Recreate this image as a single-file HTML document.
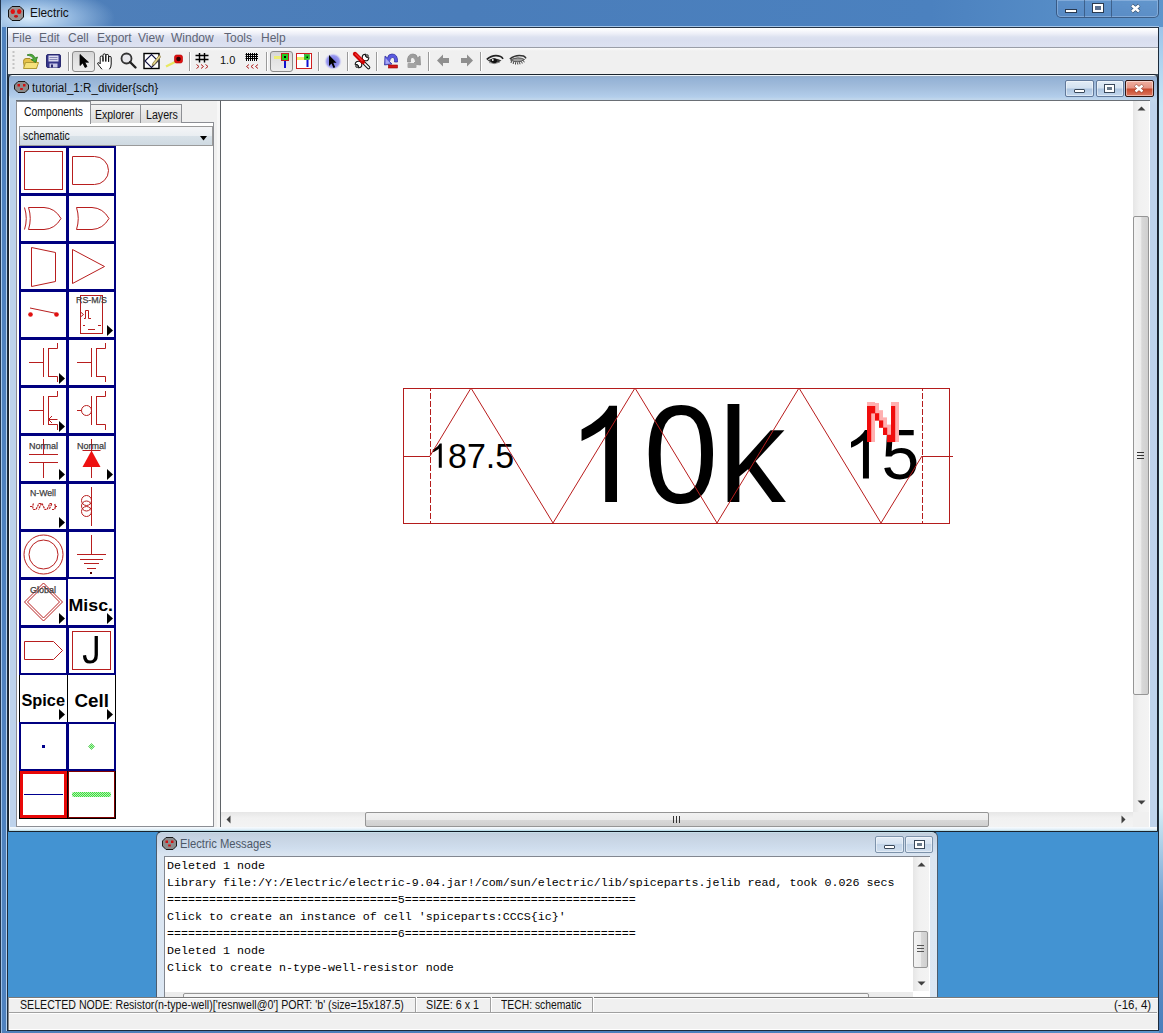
<!DOCTYPE html>
<html><head><meta charset="utf-8">
<style>
*{margin:0;padding:0;box-sizing:border-box}
html,body{width:1163px;height:1033px;overflow:hidden;background:#4393d2;font-family:"Liberation Sans",sans-serif;}
.a{position:absolute}
svg{position:absolute;overflow:visible}
#outer{left:0;top:0;width:1163px;height:1033px;background:linear-gradient(90deg,#4f7fb9 0%,#4a7dba 40%,#4b81bf 80%,#5e95cc 100%);}
#glow{left:0;top:0;width:200px;height:27px;background:radial-gradient(ellipse 85px 30px at 30px 18px,rgba(225,242,255,.95),rgba(190,220,248,.6) 50%,rgba(120,160,210,0) 100%);}
#menubar{left:8px;top:27px;width:1150px;height:21px;background:linear-gradient(#fff 0,#fafbfd 2px,#eceef7 6px,#dde2f0 9px,#d9deef 12px,#dde2f1 19px);border-top:1px solid #263445;border-bottom:1px solid #9a9ea8;}
#menubar span{position:absolute;top:3px;font-size:12px;color:#5e6474;}
#toolbar{left:8px;top:48px;width:1150px;height:26px;background:linear-gradient(#fbfbfb,#f0f0f0 3px);}
.sep{position:absolute;top:52px;width:1px;height:19px;background:#9a9a9a;box-shadow:1px 0 0 #fff}
.pbtn{position:absolute;top:51px;width:23px;height:21px;border:1px solid #8b8b8b;border-radius:3px;background:linear-gradient(#d6d6d6,#e4e4e4 50%,#ececec);}
#mdi{left:8px;top:74px;width:1150px;height:923px;background:#4393d2;}
#inner{left:8px;top:74px;width:1150px;height:758px;background:linear-gradient(#eef6fb 0,#eef6fb 1px,#95abc5 1px,#93b1d5 3px,#a2bddc 12px,#b3ceeb 22px,#c0d6ec 24px,#bdd3ec 30px,#bed3ec);border:1px solid #1a232c;border-radius:4px 4px 0 0;}
#lp{left:16px;top:100px;width:201px;height:727px;background:#f0f0f0;border-top:1px solid #6a6f75;}
#canvas{left:220px;top:100px;width:930px;height:727px;background:#fff;border-left:1px solid #5f6367;border-top:1px solid #6a6f75;}
#msgwin{left:156px;top:831px;width:782px;height:167px;background:linear-gradient(#c4dde8 0,#c4dde8 1px,#c2cedc 1px,#c6d3e2 5px,#cfdded 16px,#dae5f1 23px,#dce7f3);border:1px solid #4b5c6e;border-top-color:#0e1a24;border-radius:6px 6px 0 0;}
#status{left:8px;top:997px;width:1150px;height:33px;background:#f0f0f0;border-top:1px solid #7a7a7a;box-shadow:inset 0 1px 0 #fff, inset 0 -1px 0 #fff;}
.wb{position:absolute;border:1px solid #62799a;border-radius:2px;background:linear-gradient(#e2ecf6 0%,#d3e1f0 46%,#adc5e0 54%,#c4d8ee 100%);box-shadow:inset 0 0 0 1px rgba(255,255,255,.45);}
.mono{font-family:"Liberation Mono",monospace;font-size:11.67px;color:#000;position:absolute;left:167px;white-space:pre;}
</style></head><body>
<div id="outer" class="a"></div>
<div id="glow" class="a"></div>
<div class="a" style="left:0;top:0;width:1px;height:1033px;background:#22344c"></div>
<div class="a" style="left:1px;top:20px;width:1px;height:1013px;background:linear-gradient(#b8d8f4,#a6c8ec 30%,#9cc0e8)"></div><div class="a" style="left:2px;top:27px;width:4px;height:1004px;background:#4f82bf"></div>
<div class="a" style="left:6px;top:27px;width:1px;height:1004px;background:#b4d0ee"></div>
<div class="a" style="left:7px;top:27px;width:1px;height:1004px;background:#1c2b3c"></div>
<div class="a" style="left:1158px;top:27px;width:1px;height:1004px;background:#1c2b3c"></div>
<div class="a" style="left:1159px;top:27px;width:4px;height:1006px;background:linear-gradient(#9cc4ea 0px,#c8e6f6 80px,#dcf6f6 400px,#d6f0f6 780px,#6a9ad0 880px,#4a7ebb 1006px)"></div>
<div class="a" style="left:7px;top:1030px;width:1152px;height:1px;background:#1c2b3c"></div>
<!-- title -->
<svg style="left:8px;top:6px" width="16" height="15" viewBox="0 0 16 15">
<path d="M4 0.5h8l3.5 3.5v7l-3.5 3.5h-8l-3.5-3.5v-7z" fill="#9a9494" stroke="#111" stroke-width="1"/>
<ellipse cx="4.8" cy="5.5" rx="2.2" ry="2.5" fill="#e01010"/><ellipse cx="11.2" cy="5.5" rx="2.2" ry="2.5" fill="#e01010"/><ellipse cx="8" cy="10.3" rx="2" ry="1.4" fill="#c81010"/>
</svg>
<div class="a" style="left:29.5px;top:5px;font-size:13px;color:#111;transform:scaleX(.91);transform-origin:0 0">Electric</div>
<div class="a" style="left:1056px;top:0;width:103px;height:18px;border:1px solid rgba(30,50,80,.55);border-top:none;border-radius:0 0 5px 5px;background:linear-gradient(rgba(120,160,210,.2),rgba(90,130,190,.3));box-shadow:inset 0 0 0 1px rgba(200,220,245,.35)"></div>
<div class="a" style="left:1084px;top:0;width:1px;height:17px;background:rgba(30,50,80,.5)"></div>
<div class="a" style="left:1111px;top:0;width:1px;height:17px;background:rgba(30,50,80,.5)"></div>
<div class="a" style="left:1065px;top:9px;width:12px;height:4px;background:#fff;border:1px solid #2a3a50;"></div>
<div class="a" style="left:1093px;top:4px;width:10px;height:8px;border:2px solid #fff;outline:1px solid #2a3a50;background:#5a7090"></div>
<svg style="left:1130px;top:4px" width="11" height="9" viewBox="0 0 11 9"><path d="M1.8 1.3L9.2 7.7M9.2 1.3L1.8 7.7" stroke="#24344a" stroke-width="3.8" fill="none" opacity=".7"/><path d="M2 1.5L9 7.5M9 1.5L2 7.5" stroke="#fff" stroke-width="2.6" fill="none"/></svg>

<div class="a" style="left:7px;top:26px;width:1152px;height:1px;background:#a6c6e8"></div>
<div id="menubar" class="a">
<span style="left:4px">File</span><span style="left:31px">Edit</span><span style="left:60px">Cell</span><span style="left:89px">Export</span><span style="left:130px">View</span><span style="left:163px">Window</span><span style="left:216px">Tools</span><span style="left:253px">Help</span>
</div>
<div id="toolbar" class="a"></div>
<!-- toolbar grip -->
<svg style="left:12px;top:50px" width="4" height="22"><g fill="#c4c4c4"><rect x="0.5" y="1" width="2" height="2"/><rect x="0.5" y="5" width="2" height="2"/><rect x="0.5" y="9" width="2" height="2"/><rect x="0.5" y="13" width="2" height="2"/><rect x="0.5" y="17" width="2" height="2"/></g></svg>
<!-- open folder -->
<svg style="left:22px;top:52px" width="18" height="18" viewBox="0 0 18 18">
<path d="M1.5 9.5 Q1.5 6.5 4 6.5 H8 L9.5 8 H14.5 V16.5 H2.5 Z" fill="#e6c24a" stroke="#a58a2a" stroke-width="1"/>
<path d="M1.5 16.5 L3.5 10.5 H16.5 L14.5 16.5 Z" fill="#f5e27a" stroke="#b09a35" stroke-width="1"/>
<path d="M5 3 Q11 0.5 13 6 L15.5 5 L13.5 10.5 L9 7.5 L11.5 7 Q10 3.5 5 3 Z" fill="#4fae3a" stroke="#2c7a20" stroke-width="0.8"/>
</svg>
<!-- floppy -->
<svg style="left:46px;top:54px" width="15" height="14" viewBox="0 0 15 14">
<rect x="0.5" y="0.5" width="14" height="13" rx="1.5" fill="#35358a" stroke="#2a2a70"/>
<rect x="2.5" y="1.5" width="10" height="6" fill="#dcdcf0"/>
<rect x="3.5" y="3" width="8" height="1" fill="#8888b8"/><rect x="3.5" y="5" width="8" height="1" fill="#8888b8"/>
<rect x="3.5" y="9.5" width="8" height="4" fill="#c8c8e8"/><rect x="5" y="10.5" width="2" height="3" fill="#2a2a70"/>
</svg>
<div class="sep" style="left:68px"></div>
<div class="pbtn" style="left:72px"></div>
<!-- arrow cursor -->
<svg style="left:79px;top:54px" width="11" height="15" viewBox="0 0 11 15">
<path d="M1 0.5 V11.5 L3.8 9 L6 13.5 L8 12.5 L5.8 8.2 H9.5 Z" fill="#000" stroke="#000" stroke-width="0.8" stroke-linejoin="round"/>
</svg>
<!-- hand -->
<svg style="left:97px;top:53px" width="17" height="17" viewBox="0 0 17 17">
<path d="M5 16.3 Q3 14 0.8 11 Q0.3 9.6 1.6 9.6 Q2.5 9.7 3.2 10.8 V4.3 Q3.2 3 4.6 3 Q6 3 6 4.3 V8.5 V2.2 Q6 0.9 7.4 0.9 Q8.8 0.9 8.8 2.2 V8.5 V2.6 Q8.8 1.4 10.2 1.4 Q11.6 1.4 11.6 2.7 V8.8 V4.6 Q11.6 3.4 12.9 3.4 Q14.2 3.4 14.2 4.7 V11 Q14.2 14.2 12.4 16.3" fill="#fff" stroke="#111" stroke-width="1" stroke-linejoin="round"/>
</svg>
<!-- magnifier -->
<svg style="left:120px;top:52px" width="17" height="17" viewBox="0 0 17 17">
<circle cx="6.5" cy="6.5" r="5" fill="#e8e8ec" stroke="#333" stroke-width="1.8"/>
<path d="M10 10 L15.5 15.5" stroke="#222" stroke-width="2.4" stroke-linecap="round"/>
</svg>
<!-- box with pencil -->
<svg style="left:143px;top:52px" width="18" height="18" viewBox="0 0 18 18">
<rect x="1" y="1.5" width="15" height="15" fill="#fff" stroke="#000" stroke-width="1.4"/>
<path d="M2 9 L8.5 2.5 L15 9 L8.5 15.5 Z" fill="none" stroke="#101040" stroke-width="1.1"/>
<path d="M16.5 3 L10 11 L9 13.5 L11.5 12.5 L17.5 5 Z" fill="#e8d890" stroke="#8a7a40" stroke-width="0.8"/>
</svg>
<!-- red probe -->
<svg style="left:165px;top:54px" width="19" height="14" viewBox="0 0 19 14">
<path d="M1 12.5 L10 8" stroke="#e8e860" stroke-width="2.2"/>
<rect x="9.5" y="1" width="8" height="8" rx="2" fill="#e01010" stroke="#b00" stroke-width="0.6"/>
<circle cx="13.5" cy="5" r="2.3" fill="#300"/>
</svg>
<div class="sep" style="left:189px"></div>
<!-- grid coarse -->
<svg style="left:195px;top:53px" width="15" height="17" viewBox="0 0 15 17">
<path d="M4.5 0V9.5M9.5 0V9.5M0.5 2.5H13.5M0.5 6.5H13.5" stroke="#000" stroke-width="1.45"/>
<path d="M1.5 11.5L4 13.5L1.5 15.5M6 11.5L8.5 13.5L6 15.5M10.5 11.5L13 13.5L10.5 15.5" stroke="#b02020" stroke-width="1" fill="none"/>
</svg>
<div class="a" style="left:220px;top:54px;font-size:11px;color:#111">1.0</div>
<!-- grid fine -->
<svg style="left:245px;top:53px" width="15" height="17" viewBox="0 0 15 17">
<path d="M1.5 0V8M3.5 0V8M5.5 0V8M7.5 0V8M9.5 0V8M11.5 0V8M0.5 1.5H13M0.5 3.5H13M0.5 5.5H13" stroke="#000" stroke-width="1"/>
<path d="M4 11.5L1.5 13.5L4 15.5M8.5 11.5L6 13.5L8.5 15.5M13 11.5L10.5 13.5L13 15.5" stroke="#b02020" stroke-width="1" fill="none"/>
</svg>
<div class="sep" style="left:266px"></div>
<div class="pbtn" style="left:270px"></div>
<svg style="left:274px;top:53px" width="16" height="16" viewBox="0 0 16 16">
<rect x="0" y="3" width="9" height="3" fill="#f0f060" opacity=".85"/>
<rect x="7.5" y="0.5" width="7" height="7" fill="#20d020" stroke="#c02020" stroke-width="1"/>
<rect x="10" y="3" width="2" height="2" fill="#000"/>
<rect x="10" y="8" width="2" height="7" fill="#1010d0"/>
</svg>
<svg style="left:296px;top:53px" width="17" height="17" viewBox="0 0 17 17">
<rect x="0.5" y="0.5" width="15" height="15" fill="#fff" stroke="#d02020" stroke-width="1"/>
<rect x="1" y="4" width="9" height="3" fill="#f0f070"/>
<rect x="8.5" y="1.5" width="5" height="5" fill="#20d020" stroke="#108010" stroke-width=".5"/>
<rect x="10.5" y="3.5" width="1.5" height="1.5" fill="#000"/>
<rect x="10.5" y="7" width="2" height="7" fill="#1010d0"/>
</svg>
<div class="sep" style="left:318px"></div>
<!-- glowing arrow -->
<svg style="left:324px;top:53px" width="18" height="17" viewBox="0 0 18 17">
<defs><radialGradient id="gl"><stop offset="0" stop-color="#6a6ae0"/><stop offset=".7" stop-color="#9a9af0"/><stop offset="1" stop-color="#e0e0f8" stop-opacity="0"/></radialGradient></defs>
<rect x="0" y="0" width="18" height="17" rx="4" fill="url(#gl)"/>
<path d="M5 2 V13 L7.5 10.5 L9.5 15 L11.2 14.2 L9.3 9.8 H12.5 Z" fill="#000"/>
</svg>
<div class="sep" style="left:347px"></div>
<!-- tools -->
<svg style="left:353px;top:52px" width="18" height="18" viewBox="0 0 18 18">
<path d="M9.5 9.5 L15.5 15.5" stroke="#111" stroke-width="3.6" stroke-linecap="round"/>
<path d="M9.5 9.5 L15.5 15.5" stroke="#fff" stroke-width="1.6" stroke-linecap="round"/>
<path d="M14 4 L4 14" stroke="#111" stroke-width="3.4" stroke-linecap="round"/>
<path d="M14 4 L4 14" stroke="#fff" stroke-width="1.4" stroke-linecap="round"/>
<path d="M12.3 2.2 A3.3 3.3 0 1 0 15.8 5.7 L14 5.5 L12.5 4 Z" fill="#fff" stroke="#111" stroke-width="1.1"/>
<path d="M5.7 15.8 A3.3 3.3 0 1 0 2.2 12.3 L4 12.5 L5.5 14 Z" fill="#fff" stroke="#111" stroke-width="1.1"/>
<path d="M2 2 L10 10" stroke="#c00" stroke-width="4.2" stroke-linecap="round"/>
<path d="M2.5 2 L9 8.5" stroke="#f03030" stroke-width="1.5" stroke-linecap="round"/>
</svg>
<div class="sep" style="left:376px"></div>
<!-- undo -->
<svg style="left:383px;top:53px" width="16" height="16" viewBox="0 0 16 16">
<path d="M14.5 9 Q15 1 9 1 Q5 1 4.5 5 L2 3 L1.5 12 L9 11 L6.5 8.5 Q7 4.5 9.5 4.5 Q12 4.5 11.5 9 Z" fill="#5a5ae0" stroke="#2a2a9a" stroke-width=".7"/>
<path d="M2.5 5 L2.5 11 L7.5 10.5 Z" fill="#a8a8f4"/>
<rect x="5.5" y="12" width="9" height="3" fill="#d01818" stroke="#900" stroke-width=".6"/>
</svg>
<!-- redo gray -->
<svg style="left:406px;top:53px" width="16" height="16" viewBox="0 0 16 16">
<path d="M1.5 9 Q1 1 7 1 Q11 1 11.5 5 L14 3 L14.5 12 L7 11 L9.5 8.5 Q9 4.5 6.5 4.5 Q4 4.5 4.5 9 Z" fill="#9c9c9c" stroke="#888" stroke-width=".7"/>
<rect x="1.5" y="10" width="9" height="5" rx="1" fill="#a4a4a4"/>
</svg>
<div class="sep" style="left:428px"></div>
<!-- back arrow -->
<svg style="left:437px;top:54px" width="13" height="13" viewBox="0 0 13 13"><path d="M0 6.5 L6 0.5 V4 H12 V9 H6 V12.5 Z" fill="#8f8f8f"/></svg>
<svg style="left:460px;top:54px" width="13" height="13" viewBox="0 0 13 13"><path d="M13 6.5 L7 0.5 V4 H1 V9 H7 V12.5 Z" fill="#8f8f8f"/></svg>
<div class="sep" style="left:480px"></div>
<!-- eyes -->
<svg style="left:486px;top:54px" width="18" height="12" viewBox="0 0 18 12">
<path d="M0.8 5.5 Q7 0 14.5 2.5 Q16 3 17 4.8" stroke="#222" stroke-width="1.7" fill="none"/>
<path d="M1.5 6.5 Q8 2.5 15.5 6.5 Q9 11.5 1.5 6.5Z" fill="#3a3a3a"/>
<ellipse cx="8" cy="6.8" rx="3" ry="2.6" fill="#111"/>
<circle cx="6.8" cy="6" r=".9" fill="#fff"/>
<path d="M3 8.5 Q9 11 14 8" stroke="#777" stroke-width=".8" fill="none"/>
</svg>
<svg style="left:509px;top:54px" width="18" height="12" viewBox="0 0 18 12">
<path d="M0.8 5 Q7 0 14.5 2 Q16 2.6 17 4.4" stroke="#333" stroke-width="1.5" fill="none"/>
<path d="M1.5 6 Q9 2 15.5 5.5 Q9 10 1.5 6Z" fill="#a0a0a0" stroke="#444" stroke-width=".9"/>
<path d="M2.5 7L2 9M4.5 7.8L4.2 10M6.5 8.3L6.5 10.5M8.5 8.5L8.8 10.5M10.5 8.2L11 10.3M12.5 7.5L13.3 9.5M14.3 6.5L15.3 8.3" stroke="#333" stroke-width=".9"/>
</svg>


<div id="mdi" class="a"></div>
<div class="a" style="left:8px;top:74px;width:4px;height:4px;background:#40505e"></div><div class="a" style="left:1154px;top:74px;width:4px;height:4px;background:#40505e"></div>
<div id="inner" class="a"></div>
<svg style="left:14px;top:81px" width="15" height="12" viewBox="0 0 15 12">
<path d="M4 0.5h7l3.5 3.5v4l-3.5 3.5h-7l-3.5-3.5v-4z" fill="#8c8c8c" stroke="#1a1a1a" stroke-width="1"/>
<rect x="3.5" y="3" width="2.5" height="2.5" fill="#d01010"/><rect x="9" y="3" width="2.5" height="2.5" fill="#d01010"/><rect x="6.2" y="7" width="2.6" height="2" fill="#d01010"/>
</svg>
<div class="a" style="left:32px;top:81px;font-size:12px;color:#111;white-space:nowrap;transform:scaleX(.969);transform-origin:0 0">tutorial_1:R_divider{sch}</div>
<div class="wb" style="left:1065px;top:80px;width:29px;height:17px;"></div>
<div class="wb" style="left:1096px;top:80px;width:28px;height:17px;"></div>
<div class="wb" style="left:1125px;top:80px;width:29px;height:17px;border-color:#2e1410;background:linear-gradient(#f0b0a0 0%,#e49484 46%,#c84a2e 54%,#dc7860 100%);"></div>
<div class="a" style="left:1074px;top:89px;width:11px;height:4px;background:#fff;border:1px solid #39485a;border-radius:1px"></div>
<div class="a" style="left:1105px;top:85px;width:9px;height:7px;border:2px solid #fff;outline:1px solid #39485a;background:#6a7a8a"></div>
<svg style="left:1133px;top:84px" width="12" height="9" viewBox="0 0 12 9"><path d="M2.2 1.2L9.8 7.8M9.8 1.2L2.2 7.8" stroke="#6a2818" stroke-width="3.6" fill="none" opacity=".6"/><path d="M2.5 1.5L9.5 7.5M9.5 1.5L2.5 7.5" stroke="#fff" stroke-width="2.5" fill="none"/></svg>

<div class="a" style="left:9px;top:96px;width:1px;height:735px;background:linear-gradient(rgba(255,255,255,.3),#f4f8fc 20px)"></div>
<div class="a" style="left:1148px;top:100px;width:2px;height:727px;background:#fafcfe"></div>
<div class="a" style="left:9px;top:827px;width:1148px;height:4px;background:linear-gradient(#f8fbfe,#e4f0f8 60%,#a8d4e0)"></div>
<div class="a" style="left:217px;top:100px;width:3px;height:727px;background:#f7f7f7;border-top:1px solid #6a6f75"></div>
<div id="lp" class="a"></div>
<!-- tabs -->
<div class="a" style="left:16px;top:122px;width:198px;height:705px;border:1px solid #8c8e94;background:#fff"></div>
<div class="a" style="left:90px;top:104px;width:51px;height:19px;border:1px solid #8e9095;border-bottom:none;background:linear-gradient(#f3f3f3,#e6e6e6 50%,#dcdcdc);"></div>
<div class="a" style="left:140px;top:104px;width:42px;height:19px;border:1px solid #8e9095;border-bottom:none;background:linear-gradient(#f3f3f3,#e6e6e6 50%,#dcdcdc);"></div>
<div class="a" style="left:16px;top:101px;width:75px;height:23px;border:1px solid #8e9095;border-bottom:none;background:#fff;"></div>
<div class="a" style="left:24px;top:105px;font-size:12px;color:#111;white-space:nowrap;transform:scaleX(.867);transform-origin:0 0">Components</div>
<div class="a" style="left:95px;top:108px;font-size:12px;color:#111;white-space:nowrap;transform:scaleX(.875);transform-origin:0 0">Explorer</div>
<div class="a" style="left:146px;top:108px;font-size:12px;color:#111;white-space:nowrap;transform:scaleX(.886);transform-origin:0 0">Layers</div>
<!-- combo -->
<div class="a" style="left:19px;top:126px;width:194px;height:20px;border:1px solid #9a9a9a;background:linear-gradient(#f4f5f7 0%,#eaeef2 48%,#d8e1e8 52%,#cfdae2 100%);"></div>
<div class="a" style="left:23px;top:129px;font-size:12px;color:#111;white-space:nowrap;transform:scaleX(.866);transform-origin:0 0">schematic</div>
<svg style="left:200px;top:136px" width="8" height="5"><path d="M0 0H7L3.5 4.5Z" fill="#000"/></svg>
<svg style="left:19px;top:146px" width="97" height="673" viewBox="19 146 97 673">
<rect x="19" y="146" width="97" height="673" fill="#000080"/>
<rect x="21" y="148" width="45" height="45" fill="#fff"/>
<rect x="69" y="148" width="45" height="45" fill="#fff"/>
<rect x="21" y="196" width="45" height="45" fill="#fff"/>
<rect x="69" y="196" width="45" height="45" fill="#fff"/>
<rect x="21" y="244" width="45" height="45" fill="#fff"/>
<rect x="69" y="244" width="45" height="45" fill="#fff"/>
<rect x="21" y="292" width="45" height="45" fill="#fff"/>
<rect x="69" y="292" width="45" height="45" fill="#fff"/>
<rect x="21" y="340" width="45" height="45" fill="#fff"/>
<rect x="69" y="340" width="45" height="45" fill="#fff"/>
<rect x="21" y="388" width="45" height="45" fill="#fff"/>
<rect x="69" y="388" width="45" height="45" fill="#fff"/>
<rect x="21" y="436" width="45" height="45" fill="#fff"/>
<rect x="69" y="436" width="45" height="45" fill="#fff"/>
<rect x="21" y="484" width="45" height="45" fill="#fff"/>
<rect x="69" y="484" width="45" height="45" fill="#fff"/>
<rect x="21" y="532" width="45" height="45" fill="#fff"/>
<rect x="69" y="532" width="45" height="45" fill="#fff"/>
<rect x="21" y="580" width="45" height="45" fill="#fff"/>
<rect x="68" y="579" width="46" height="46" fill="#fff"/>
<rect x="21" y="628" width="45" height="45" fill="#fff"/>
<rect x="69" y="628" width="45" height="45" fill="#fff"/>
<rect x="21" y="724" width="45" height="45" fill="#fff"/>
<rect x="69" y="724" width="45" height="45" fill="#fff"/>
<rect x="19" y="675" width="97" height="47" fill="#000"/>
<rect x="20" y="675" width="47" height="47" fill="#fff"/><rect x="68" y="675" width="47" height="47" fill="#fff"/>
<rect x="19" y="771" width="97" height="48" fill="#000"/>
<rect x="20" y="771" width="47" height="47" fill="#e80808"/><rect x="23" y="774" width="41" height="41" fill="#fff"/>
<rect x="68" y="771" width="47" height="47" fill="#800000"/><rect x="69" y="772" width="45" height="45" fill="#fff"/>
<g fill="none" stroke="#b81e1e" stroke-width="1">
<rect x="24.5" y="151.5" width="38" height="38"/>
<path d="M72.5 156.5 H94.5 A14 14 0 0 1 94.5 184.5 H72.5 Z"/>
<path d="M28.5 207.5 H44 Q55 208 61 218.5 Q55 229 44 229.5 H28.5 Q32 218.5 28.5 207.5 Z"/>
<path d="M24.5 207.5 Q28 218.5 24.5 229.5"/>
<path d="M76.5 207.5 H92 Q103 208 109 218.5 Q103 229 92 229.5 H76.5 Q80 218.5 76.5 207.5 Z"/>
<path d="M31.5 247.5 L55.5 252.5 V281.5 L31.5 286.5 Z"/>
<path d="M72.5 249.5 L104.5 266.5 L72.5 283.5 Z"/>
<path d="M30 308 L56.5 313.5"/>
<rect x="80.5" y="295.5" width="22" height="38"/>
<path d="M80.5 312 L83.5 314.5 L80.5 317 M84 318.5 H85.5 V310.5 H88.5 V318.5 H91"/>
<path d="M83 325.5 H85 M98 325.5 H101 M88 329.5 H95"/>
<path d="M29 362.5 H43.5 M43.5 348 V377 M48.5 348 V377 M48.5 348.5 H57.5 V343 M48.5 376.5 H57.5 V382"/>
<path d="M77 362.5 H91.5 M91.5 348 V377 M96.5 348 V377 M96.5 348.5 H105.5 V343 M96.5 376.5 H105.5 V382"/>
<path d="M29 410.5 H43.5 M43.5 396 V425 M48.5 396 V425 M48.5 396.5 H57.5 V391 M48.5 424.5 H57.5 V430 M48.5 419.5 H57.5 M48.5 419.5 L52 416 M48.5 419.5 L52 423"/>
<path d="M77 410.5 H81.5 M91.5 396 V425 M96.5 396 V425 M96.5 396.5 H105.5 V391 M96.5 424.5 H105.5 V430"/>
<circle cx="86.5" cy="410.5" r="5"/>
<path d="M43.5 439 V454.5 M29 454.5 H58 M29 462.5 H58 M43.5 462.5 V478"/>
<path d="M91.5 439 V478 M82.5 450.5 H100.5"/>
<path d="M91.5 487 V526"/>
<circle cx="86.5" cy="500.5" r="5"/><circle cx="86.5" cy="506" r="5"/><circle cx="86.5" cy="511.5" r="5"/>
<path d="M30 506.5 H33 M33.5 503.5 Q32 506.5 33.5 509.5 H36 L39 503.5 H41.5 L38.5 509.5 M42 503.5 L45 509.5 H47 L50 503.5 H52 L49 509.5 M52 509.5 H54.5 Q56 506.5 54.5 503.5 M55 506.5 H57" stroke-width="1.2" stroke-dasharray="2.2 0.8"/>
<circle cx="43.5" cy="554.5" r="19.5"/><circle cx="43.5" cy="554.5" r="14.5"/>
<path d="M91.5 535 V554.5 M77 554.5 H106 M80 559.5 H103 M84 563.5 H99 M87 568.5 H96"/>
<path d="M43.5 583 L62.5 602 L43.5 621 L24.5 602 Z"/><path d="M43.5 586 L59.5 602 L43.5 618 L27.5 602 Z"/>
<path d="M24.5 641.5 H53.5 L62.5 650.5 L53.5 659.5 H24.5 Z"/>
<rect x="72.5" y="631.5" width="38" height="38"/>
</g>
<circle cx="30.5" cy="314.5" r="2.3" fill="#e01010"/><circle cx="56.5" cy="314.5" r="2.3" fill="#e01010"/>
<path d="M82.5 467 H100.5 L91.5 450.5 Z" fill="#ee1111"/>
<rect x="90" y="572" width="2" height="2" fill="#500"/>
<g font-family="Liberation Sans" font-size="9.5" fill="#3c3c3c" stroke="#3c3c3c" stroke-width="0.25">
<text x="76" y="303.3" textLength="31" lengthAdjust="spacingAndGlyphs">RS-M/S</text>
<text x="29" y="449.2" textLength="29" lengthAdjust="spacingAndGlyphs">Normal</text>
<text x="77" y="449.2" textLength="29" lengthAdjust="spacingAndGlyphs">Normal</text>
<text x="30" y="496.2" textLength="26" lengthAdjust="spacingAndGlyphs">N-Well</text>
<text x="30" y="593.3" textLength="26" lengthAdjust="spacingAndGlyphs">Global</text>
</g>
<path d="M107 325 L113 330.5 L107 336 Z" fill="#000"/>
<path d="M59 373 L65 378.5 L59 384 Z" fill="#000"/>
<path d="M59 421 L65 426.5 L59 432 Z" fill="#000"/>
<path d="M59 469 L65 474.5 L59 480 Z" fill="#000"/>
<path d="M107 469 L113 474.5 L107 480 Z" fill="#000"/>
<path d="M59 517 L65 522.5 L59 528 Z" fill="#000"/>
<path d="M59 613 L65 618.5 L59 624 Z" fill="#000"/>
<path d="M107 613 L113 618.5 L107 624 Z" fill="#000"/>
<path d="M59 709 L65 714.5 L59 720 Z" fill="#000"/>
<path d="M107 709 L113 714.5 L107 720 Z" fill="#000"/>
<text x="68.5" y="611" font-family="Liberation Sans" font-weight="bold" font-size="17.3" textLength="44.5" lengthAdjust="spacingAndGlyphs" fill="#000">Misc.</text>
<text x="21.5" y="705.8" font-family="Liberation Sans" font-weight="bold" font-size="15.8" textLength="43.5" lengthAdjust="spacingAndGlyphs" fill="#000">Spice</text>
<text x="74.5" y="706.5" font-family="Liberation Sans" font-weight="bold" font-size="17.5" textLength="34.5" lengthAdjust="spacingAndGlyphs" fill="#000">Cell</text>
<path d="M94.6 636 H97.9 V655 Q97.9 663.6 90 663.6 Q83.2 663.6 82.9 655.4 L86.1 654.9 Q86.4 660.5 90.2 660.5 Q94.6 660.5 94.6 654.5 Z" fill="#000"/>
<rect x="42" y="745" width="3" height="3" fill="#00008c"/>
<path d="M91.5 743.5 L94.5 746.5 L91.5 749.5 L88.5 746.5 Z" fill="url(#chk)" stroke="#40c040" stroke-width=".6"/>
<rect x="24" y="794" width="39" height="1" fill="#000090"/>
<defs><pattern id="chk" width="2" height="2" patternUnits="userSpaceOnUse"><rect width="1" height="1" fill="#3ce03c"/><rect x="1" y="1" width="1" height="1" fill="#3ce03c"/><rect x="1" width="1" height="1" fill="#b8f0b8"/><rect y="1" width="1" height="1" fill="#b8f0b8"/></pattern></defs>
<rect x="72" y="792" width="39" height="5" rx="2" fill="url(#chk)"/>
</svg>

<div id="canvas" class="a"></div>
<svg style="left:221px;top:101px" width="912" height="711" viewBox="221 101 912 711">
<path transform="translate(566.9 502) scale(0.065674 -0.065674)" d="M763 0H583V1147Q518 1085 412 1023Q306 961 223 930V1104Q373 1174 485 1274Q597 1374 643 1466H763Z" fill="#000"/>
<text x="643.4" y="0" transform="translate(0 502.5) scale(1 1.035)" font-family="Liberation Sans" font-size="134.5" fill="#000">0</text>
<text x="718.4" y="502" font-family="Liberation Sans" font-size="134.5" fill="#000">k</text>
<path transform="translate(429.1 467.8) scale(0.016602 -0.016602)" d="M763 0H583V1147Q518 1085 412 1023Q306 961 223 930V1104Q373 1174 485 1274Q597 1374 643 1466H763Z" fill="#000"/>
<text x="448" y="0" transform="translate(0 468) scale(1 1.04)" font-family="Liberation Sans" font-size="34" fill="#000">87.5</text>
<path transform="translate(843.6 478.6) scale(0.033203 -0.033203)" d="M763 0H583V1147Q518 1085 412 1023Q306 961 223 930V1104Q373 1174 485 1274Q597 1374 643 1466H763Z" fill="#000"/>
<text x="881.4" y="0" transform="translate(0 478.6) scale(1 1.035)" font-family="Liberation Sans" font-size="68" fill="#000">5</text>


<g fill="none" stroke="#b41c1c" stroke-width="1" shape-rendering="crispEdges">
<rect x="403.5" y="388.5" width="546" height="135"/>
<path d="M403 456.5 H430 M922 456.5 H953"/>
<path d="M430.5 388 V524 M922.5 388 V524" stroke-dasharray="6 2" stroke-dashoffset="3"/>
</g>
<path d="M430 456 L471 388 L553 523 L635 388 L717 523 L799 388 L881 523 L922 456" fill="none" stroke="#b81c1c" stroke-width="1"/>
<g>
<rect x="867" y="402" width="8" height="40" fill="#ffb0b0"/><rect x="891" y="402" width="8" height="40" fill="#ffb0b0"/>
<rect x="871" y="403.0" width="8" height="10.2" fill="#ffb0b0"/><rect x="875" y="410.2" width="8" height="10.2" fill="#ffb0b0"/><rect x="879" y="417.4" width="8" height="10.2" fill="#ffb0b0"/><rect x="883" y="424.6" width="8" height="10.2" fill="#ffb0b0"/><rect x="887" y="431.8" width="8" height="10.2" fill="#ffb0b0"/>
<rect x="867" y="406" width="4.2" height="36" fill="#f00c0c"/><rect x="891" y="406" width="4.2" height="36" fill="#f00c0c"/>
<rect x="871" y="406.0" width="4.2" height="7.4" fill="#f00c0c"/><rect x="875" y="413.2" width="4.2" height="7.4" fill="#f00c0c"/><rect x="879" y="420.4" width="4.2" height="7.4" fill="#f00c0c"/><rect x="883" y="427.6" width="4.2" height="7.4" fill="#f00c0c"/><rect x="887" y="434.8" width="4.2" height="7.4" fill="#f00c0c"/>
</g>
</svg>
<!-- vertical scrollbar -->
<div class="a" style="left:1133px;top:101px;width:16px;height:711px;background:linear-gradient(90deg,#e6e6e6,#f1f1f1 40%,#f3f3f3);"></div>
<svg style="left:1137px;top:106px" width="9" height="6"><path d="M0.5 4.5L4.5 0.5L8.5 4.5Z" fill="#404040"/></svg>
<svg style="left:1137px;top:800px" width="9" height="6"><path d="M0.5 0.5L4.5 4.5L8.5 0.5Z" fill="#404040"/></svg>
<div class="a" style="left:1133px;top:216px;width:16px;height:479px;border:1px solid #959595;border-radius:2px;background:linear-gradient(90deg,#f2f2f2,#ececec 50%,#d8d8d8 55%,#cfcfcf);"></div>
<div class="a" style="left:1137px;top:452px;width:7px;height:8px;background:repeating-linear-gradient(#333 0 1.4px,transparent 1.4px 3px);"></div>
<!-- horizontal scrollbar -->
<div class="a" style="left:221px;top:812px;width:912px;height:15px;background:linear-gradient(#e6e6e6,#f1f1f1 40%,#f3f3f3);"></div>
<div class="a" style="left:1133px;top:812px;width:16px;height:15px;background:#f0f0f0"></div>
<svg style="left:226px;top:815px" width="6" height="9"><path d="M4.5 0.5L0.5 4.5L4.5 8.5Z" fill="#404040"/></svg>
<svg style="left:1121px;top:815px" width="6" height="9"><path d="M0.5 0.5L4.5 4.5L0.5 8.5Z" fill="#404040"/></svg>
<div class="a" style="left:365px;top:812px;width:624px;height:15px;border:1px solid #959595;border-radius:2px;background:linear-gradient(#f2f2f2,#ececec 50%,#d8d8d8 55%,#cfcfcf);"></div>
<div class="a" style="left:673px;top:816px;width:8px;height:7px;background:repeating-linear-gradient(90deg,#333 0 1.4px,transparent 1.4px 3px);"></div>

<div id="msgwin" class="a"></div>
<svg style="left:162px;top:837px" width="15" height="13" viewBox="0 0 15 13">
<path d="M4 0.5h7l3.5 3.5v5l-3.5 3.5h-7l-3.5-3.5v-5z" fill="#8c8c8c" stroke="#1a1a1a" stroke-width="1"/>
<rect x="3.5" y="3.5" width="2.5" height="2.5" fill="#d01010"/><rect x="9" y="3.5" width="2.5" height="2.5" fill="#d01010"/><rect x="6.2" y="7.5" width="2.6" height="2" fill="#d01010"/>
</svg>
<div class="a" style="left:180px;top:837px;font-size:12px;color:#4c5868;transform:scaleX(.935);transform-origin:0 0;white-space:nowrap">Electric Messages</div>
<div class="wb" style="left:875px;top:836px;width:29px;height:17px;border-color:#7d93ab;background:linear-gradient(#e4edf7 0%,#d6e3f1 45%,#c3d5e9 50%,#cfdeee 100%);"></div>
<div class="wb" style="left:905px;top:836px;width:28px;height:17px;border-color:#7d93ab;background:linear-gradient(#e4edf7 0%,#d6e3f1 45%,#c3d5e9 50%,#cfdeee 100%);"></div>
<div class="a" style="left:884px;top:845px;width:11px;height:4px;background:#fff;border:1px solid #39485a;border-radius:1px"></div>
<div class="a" style="left:915px;top:841px;width:9px;height:7px;border:2px solid #fff;outline:1px solid #39485a;background:#6a7a8a"></div>
<div class="a" style="left:164px;top:856px;width:766px;height:141px;background:#fff;border-left:1px solid #828790;border-top:1px solid #828790;"></div>
<div class="mono" style="top:859px">Deleted 1 node</div>
<div class="mono" style="top:876px">Library file:/Y:/Electric/electric-9.04.jar!/com/sun/electric/lib/spiceparts.jelib read, took 0.026 secs</div>
<div class="mono" style="top:893px">=================================5=================================</div>
<div class="mono" style="top:910px">Click to create an instance of cell 'spiceparts:CCCS{ic}'</div>
<div class="mono" style="top:927px">=================================6=================================</div>
<div class="mono" style="top:944px">Deleted 1 node</div>
<div class="mono" style="top:961px">Click to create n-type-well-resistor node</div>
<!-- v scrollbar -->
<div class="a" style="left:913px;top:857px;width:16px;height:134px;background:linear-gradient(90deg,#e6e6e6,#f1f1f1 40%,#f3f3f3);"></div>
<svg style="left:917px;top:862px" width="9" height="6"><path d="M0.5 4.5L4.5 0.5L8.5 4.5Z" fill="#404040"/></svg>
<svg style="left:917px;top:981px" width="9" height="6"><path d="M0.5 0.5L4.5 4.5L8.5 0.5Z" fill="#404040"/></svg>
<div class="a" style="left:913px;top:931px;width:15px;height:37px;border:1px solid #959595;border-radius:2px;background:linear-gradient(90deg,#f2f2f2,#ececec 50%,#d8d8d8 55%,#cfcfcf);"></div>
<div class="a" style="left:917px;top:945px;width:7px;height:7px;background:repeating-linear-gradient(#555 0 1px,transparent 1px 3px);"></div>
<!-- h scrollbar -->
<div class="a" style="left:165px;top:992px;width:748px;height:5px;background:#ececec;"></div>
<div class="a" style="left:183px;top:993px;width:686px;height:6px;border:1px solid #959595;border-radius:2px;background:#f4f4f4;"></div>

<div id="status" class="a"></div>
<div class="a" style="left:9px;top:998px;width:1148px;height:15px;border-top:1px solid #fff;border-bottom:1px solid #a0a0a0;background:#f0f0f0"></div><div class="a" style="left:9px;top:1013px;width:1148px;height:1px;background:#fff"></div>
<div class="a" style="left:8px;top:997px;width:1px;height:33px;background:#8a8a8a"></div>
<div class="a" style="left:415px;top:997px;width:1px;height:15px;background:#a0a0a0;box-shadow:1px 0 0 #fff"></div>
<div class="a" style="left:490px;top:997px;width:1px;height:15px;background:#a0a0a0;box-shadow:1px 0 0 #fff"></div>
<div class="a" style="left:592px;top:997px;width:1px;height:15px;background:#a0a0a0;box-shadow:1px 0 0 #fff"></div>
<div class="a" style="left:20px;top:998px;font-size:12px;color:#111;white-space:nowrap;transform:scaleX(.884);transform-origin:0 0">SELECTED NODE: Resistor(n-type-well)['resnwell@0'] PORT: 'b' (size=15x187.5)</div>
<div class="a" style="left:426px;top:998px;font-size:12px;color:#111;white-space:nowrap;transform:scaleX(.893);transform-origin:0 0">SIZE: 6 x 1</div>
<div class="a" style="left:501px;top:998px;font-size:12px;color:#111;white-space:nowrap;transform:scaleX(.862);transform-origin:0 0">TECH: schematic</div>
<div class="a" style="left:1114px;top:998px;font-size:12px;color:#111;white-space:nowrap;transform:scaleX(.96);transform-origin:0 0">(-16, 4)</div>

</body></html>
